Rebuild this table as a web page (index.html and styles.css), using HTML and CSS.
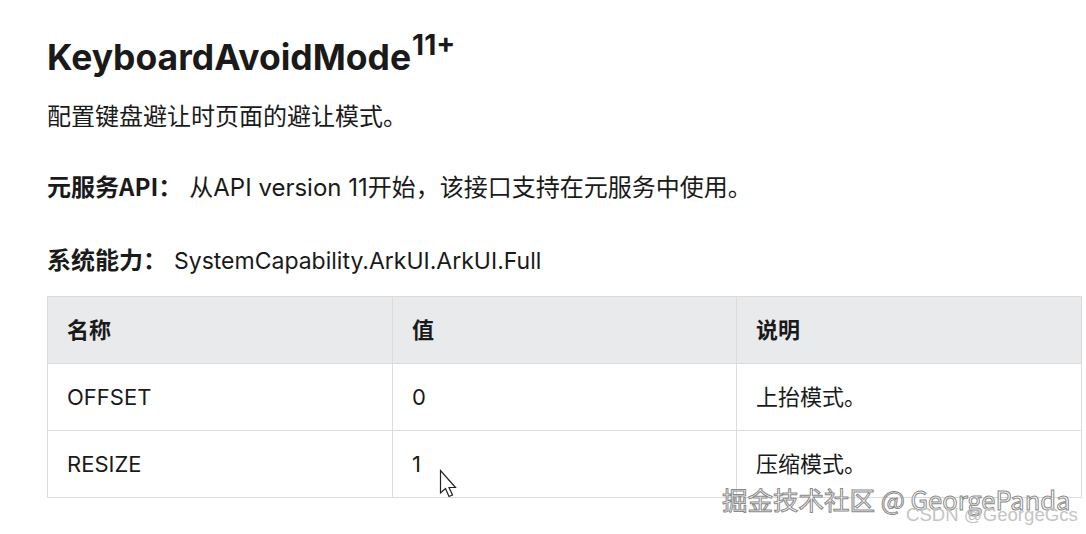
FILE: index.html
```html
<!DOCTYPE html>
<html lang="zh">
<head>
<meta charset="utf-8">
<link rel="stylesheet" href="styles.css">
</head>
<body>
<main class="doc">
  <h2 class="title">KeyboardAvoidMode<sup class="ver">11+</sup></h2>
  <p class="desc">配置键盘避让时页面的避让模式。</p>
  <p class="meta"><span class="label">元服务API：</span><span class="val val-cjk">从API version 11开始，该接口支持在元服务中使用。</span></p>
  <p class="meta meta2"><span class="label">系统能力：</span><span class="val">SystemCapability.ArkUI.ArkUI.Full</span></p>
  <table class="tbl">
    <thead>
      <tr><th>名称</th><th>值</th><th>说明</th></tr>
    </thead>
    <tbody>
      <tr><td>OFFSET</td><td>0</td><td class="cjk">上抬模式。</td></tr>
      <tr><td>RESIZE</td><td>1</td><td class="cjk">压缩模式。</td></tr>
    </tbody>
  </table>
</main>
<svg class="cursor" width="20" height="30" viewBox="0 0 20 30">
  <path d="M1.5 1.5 L1.5 24 L6.5 19.5 L10 27.5 L13.5 26 L10 18.5 L16.5 18.5 Z" fill="#fff" stroke="#222" stroke-width="1.2" stroke-linejoin="miter"/>
</svg>
<div class="wm1">掘金技术社区 @ GeorgePanda</div>
<div class="wm2">CSDN @GeorgeGcs</div>
</body>
</html>
```
FILE: styles.css
```css
html, body {
  margin: 0;
  padding: 0;
  background: #fff;
}
body {
  width: 1086px;
  height: 534px;
  overflow: hidden;
  position: relative;
  font-family: "Inter", "Noto Sans", "Noto Sans CJK SC", sans-serif;
  color: #1a1a1a;
}
.doc {
  padding: 30px 5px 0 47px;
}
.title {
  margin: 0;
  height: 56px;
  font-size: 35.5px;
  font-weight: 700;
  line-height: 56px;
  letter-spacing: 0;
  color: #1a1a1a;
  white-space: nowrap;
}
.ver {
  font-size: 28px;
  line-height: 0;
  vertical-align: 0;
  position: relative;
  top: -15px;
  margin-left: 1px;
}
.desc {
  margin: 13px 0 0;
  height: 32px;
  font-size: 24px;
  line-height: 32px;
  font-family: "Noto Sans CJK SC", sans-serif;
  white-space: nowrap;
}
.meta {
  margin: 39px 0 0;
  height: 32px;
  font-size: 23px;
  line-height: 32px;
  white-space: nowrap;
}
.meta2 {
  margin-top: 41px;
}
.label {
  font-size: 24px;
  font-weight: 700;
  font-family: "Noto Sans CJK SC", sans-serif;
}
.val {
  margin-left: 7px;
}
.val-cjk {
  font-size: 24px;
  margin-left: 7px;
}
.tbl {
  margin-top: 21px;
  width: 1035px;
  border-collapse: collapse;
  table-layout: fixed;
  font-size: 22px;
}
.tbl th, .tbl td {
  border: 1px solid #dcdcdc;
  height: 67px;
  padding: 0 19px;
  text-align: left;
  box-sizing: border-box;
}
.tbl th {
  background: #e9eaec;
  font-weight: 700;
  font-family: "Noto Sans CJK SC", sans-serif;
  padding-bottom: 5px;
}
.tbl td.cjk {
  font-family: "Noto Sans CJK SC", sans-serif;
  padding-bottom: 4px;
}
.tbl th:nth-child(1), .tbl td:nth-child(1) { width: 345px; }
.tbl th:nth-child(2), .tbl td:nth-child(2) { width: 344px; }
.tbl td { color: #1a1a1a; }
.cursor {
  position: absolute;
  left: 439px;
  top: 469px;
}
.wm1 {
  position: absolute;
  left: 722px;
  top: 480px;
  font-family: "Noto Sans CJK SC", sans-serif;
  font-size: 25.5px;
  color: #fff;
  -webkit-text-stroke: 1px #8a8a8a;
  white-space: nowrap;
}
.wm2 {
  position: absolute;
  left: 906px;
  top: 504px;
  font-family: "Liberation Sans", sans-serif;
  font-size: 18.6px;
  color: #c4c4c4;
  white-space: nowrap;
}
```
